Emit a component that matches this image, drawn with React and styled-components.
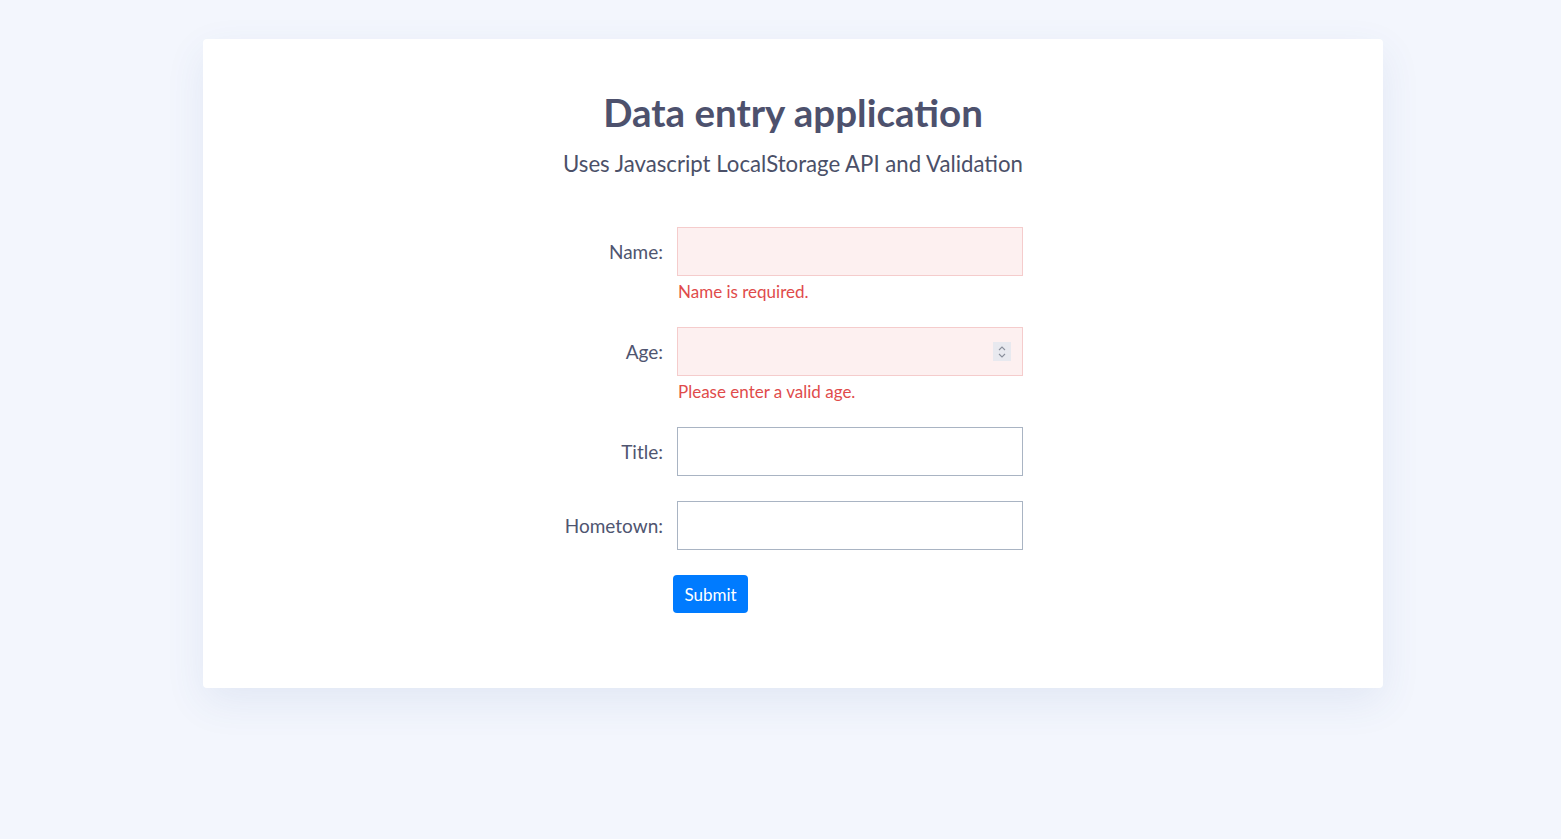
import React from "react";
import styled, { createGlobalStyle } from "styled-components";

const GlobalStyle = createGlobalStyle`
  html, body {
    margin: 0;
    padding: 0;
    background: #f3f6fd;
    font-family: "Lato", "Open Sans", sans-serif;
  }
`;

const fields = [
  { id: "name", label: "Name:", type: "text", error: "Name is required." },
  { id: "age", label: "Age:", type: "number", error: "Please enter a valid age." },
  { id: "title", label: "Title:", type: "text" },
  { id: "hometown", label: "Hometown:", type: "text" },
];

export default function App() {
  return (
    <>
      <GlobalStyle />
      <Page>
        <Card>
          <Title>Data entry application</Title>
          <Subtitle>Uses Javascript LocalStorage API and Validation</Subtitle>
          <Form onSubmit={(e) => e.preventDefault()}>
            {fields.map((f) => (
              <Field key={f.id}>
                <Label htmlFor={f.id}>{f.label}</Label>
                <InputWrap>
                  <Input id={f.id} type={f.type} $invalid={!!f.error} />
                  {f.type === "number" && (
                    <Spinner>
                      <svg width="10" height="14" viewBox="0 0 10 14" fill="none">
                        <path d="M2 5 L5 2 L8 5" stroke="#8a8f9c" strokeWidth="1.1" />
                        <path d="M2 9 L5 12 L8 9" stroke="#8a8f9c" strokeWidth="1.1" />
                      </svg>
                    </Spinner>
                  )}
                </InputWrap>
                {f.error && <Error>{f.error}</Error>}
              </Field>
            ))}
            <Actions>
              <SubmitButton type="submit">Submit</SubmitButton>
            </Actions>
          </Form>
        </Card>
      </Page>
    </>
  );
}

const Page = styled.div`
  min-height: 839px;
  padding-top: 39px;
  box-sizing: border-box;
`;

const Card = styled.div`
  width: 1180px;
  height: 649px;
  margin-left: 203px;
  box-sizing: border-box;
  background: #fff;
  border-radius: 4px;
  box-shadow: 0 14px 40px rgba(60, 90, 160, 0.09);
  padding-top: 50px;
  display: flex;
  flex-direction: column;
  align-items: center;
`;

const Title = styled.h1`
  margin: 0;
  font-size: 38.5px;
  line-height: 46px;
  font-weight: 700;
  color: #4d516d;
`;

const Subtitle = styled.p`
  margin: 14px 0 0;
  font-size: 22.2px;
  line-height: 30px;
  color: #4b5068;
`;

const Form = styled.form`
  margin-top: 48px;
  width: 460px;
`;

const Field = styled.div`
  display: grid;
  grid-template-columns: 100px 346px;
  column-gap: 14px;
  align-items: center;
  margin-bottom: 25px;
`;

const Label = styled.label`
  text-align: right;
  font-size: 19px;
  color: #4f5570;
`;

const InputWrap = styled.div`
  position: relative;
`;

const Input = styled.input`
  display: block;
  width: 100%;
  height: 49px;
  box-sizing: border-box;
  padding: 0 12px;
  font-family: inherit;
  font-size: 18px;
  border: 1px solid ${(p) => (p.$invalid ? "#f5cccc" : "#a9b4c3")};
  background: ${(p) => (p.$invalid ? "#fdf0f0" : "#fff")};
  outline: none;
  -moz-appearance: textfield;

  &::-webkit-inner-spin-button,
  &::-webkit-outer-spin-button {
    -webkit-appearance: none;
    margin: 0;
  }
`;

const Spinner = styled.span`
  position: absolute;
  right: 12px;
  top: 15px;
  width: 18px;
  height: 19px;
  background: #e8e9ef;
  display: flex;
  align-items: center;
  justify-content: center;
  pointer-events: none;
`;

const Error = styled.div`
  grid-column: 2;
  margin-top: 6px;
  padding-left: 1px;
  font-size: 17px;
  line-height: 20px;
  color: #e04b4b;
`;

const Actions = styled.div`
  padding-left: 110px;
`;

const SubmitButton = styled.button`
  width: 75px;
  height: 38px;
  border: none;
  border-radius: 4px;
  background: #007bff;
  color: #fff;
  font-family: "Lato", "Open Sans", sans-serif;
  font-size: 17px;
  cursor: pointer;
`;
